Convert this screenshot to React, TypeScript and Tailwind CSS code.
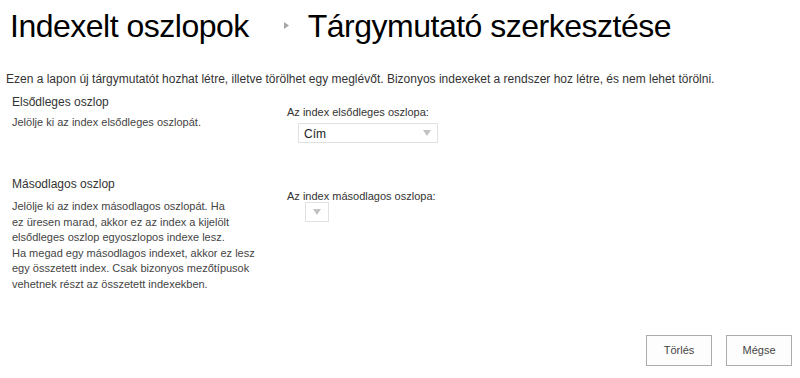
import React from "react";

const font = { fontFamily: '"Liberation Sans", Arial, sans-serif' };

function Caret() {
  return (
    <svg width="8" height="6" viewBox="0 0 8 6" className="block">
      <path d="M0 0 L8 0 L4 6 Z" fill="#c2c2c2" />
    </svg>
  );
}

export default function App() {
  return (
    <div className="w-[800px] h-[378px] bg-white relative overflow-hidden text-[#444]" style={font}>
      <div className="flex items-center pt-[6px] pl-[10px] h-[46px]">
        <span className="text-[32px] leading-[40px] text-black tracking-[-0.5px] whitespace-nowrap">Indexelt oszlopok</span>
        <span className="ml-[35px] mr-[19px] mt-[-2px]">
          <svg width="5" height="7" viewBox="0 0 5 7" className="block">
            <path d="M0 0 L5 3.5 L0 7 Z" fill="#a6a6a6" />
          </svg>
        </span>
        <span className="text-[32px] leading-[40px] text-black tracking-[-0.5px] whitespace-nowrap">Tárgymutató szerkesztése</span>
      </div>

      <p className="mt-[26px] pl-[6px] text-[12px] leading-[15px] text-[#333] whitespace-nowrap">
        Ezen a lapon új tárgymutatót hozhat létre, illetve törölhet egy meglévőt. Bizonyos indexeket a rendszer hoz létre, és nem lehet törölni.
      </p>

      <div className="flex mt-[7px]">
        <div className="w-[276px] pl-[12px]">
          <div className="text-[12px] leading-[16px] text-[#333]">Elsődleges oszlop</div>
          <div className="mt-[5px] text-[11px] leading-[15px]">Jelölje ki az index elsődleges oszlopát.</div>
        </div>
        <div className="pl-[11px] pt-[11px]">
          <div className="text-[11px] leading-[15px] text-[#333]">Az index elsődleges oszlopa:</div>
          <div className="ml-[11px] mt-[3px] w-[140px] h-[20px] border border-[#e1e1e1] flex items-center justify-between pl-[5px] pr-[6px]">
            <span className="text-[12px] text-[#222] mt-[2px]">Cím</span>
            <Caret />
          </div>
        </div>
      </div>

      <div className="flex mt-[33px]">
        <div className="w-[276px] pl-[12px]">
          <div className="text-[12px] leading-[16px] text-[#333]">Másodlagos oszlop</div>
          <div className="mt-[7px] text-[11px] leading-[15.5px] whitespace-nowrap">
            Jelölje ki az index másodlagos oszlopát. Ha
            <br />
            ez üresen marad, akkor ez az index a kijelölt
            <br />
            elsődleges oszlop egyoszlopos indexe lesz.
            <br />
            Ha megad egy másodlagos indexet, akkor ez lesz
            <br />
            egy összetett index. Csak bizonyos mezőtípusok
            <br />
            vehetnek részt az összetett indexekben.
          </div>
        </div>
        <div className="pl-[11px] pt-[13px]">
          <div className="text-[11px] leading-[15px] text-[#333]">Az index másodlagos oszlopa:</div>
          <div className="ml-[18px] mt-[-2px] w-[24px] h-[20px] border border-[#e1e1e1] flex items-center justify-center">
            <Caret />
          </div>
        </div>
      </div>

      <div className="absolute right-[8px] bottom-[12px] flex gap-[14px]">
        <button className="w-[66px] h-[31px] border border-[#ababab] bg-[#fdfdfd] text-[11px] text-[#444]">Törlés</button>
        <button className="w-[66px] h-[31px] border border-[#ababab] bg-[#fdfdfd] text-[11px] text-[#444]">Mégse</button>
      </div>
    </div>
  );
}
